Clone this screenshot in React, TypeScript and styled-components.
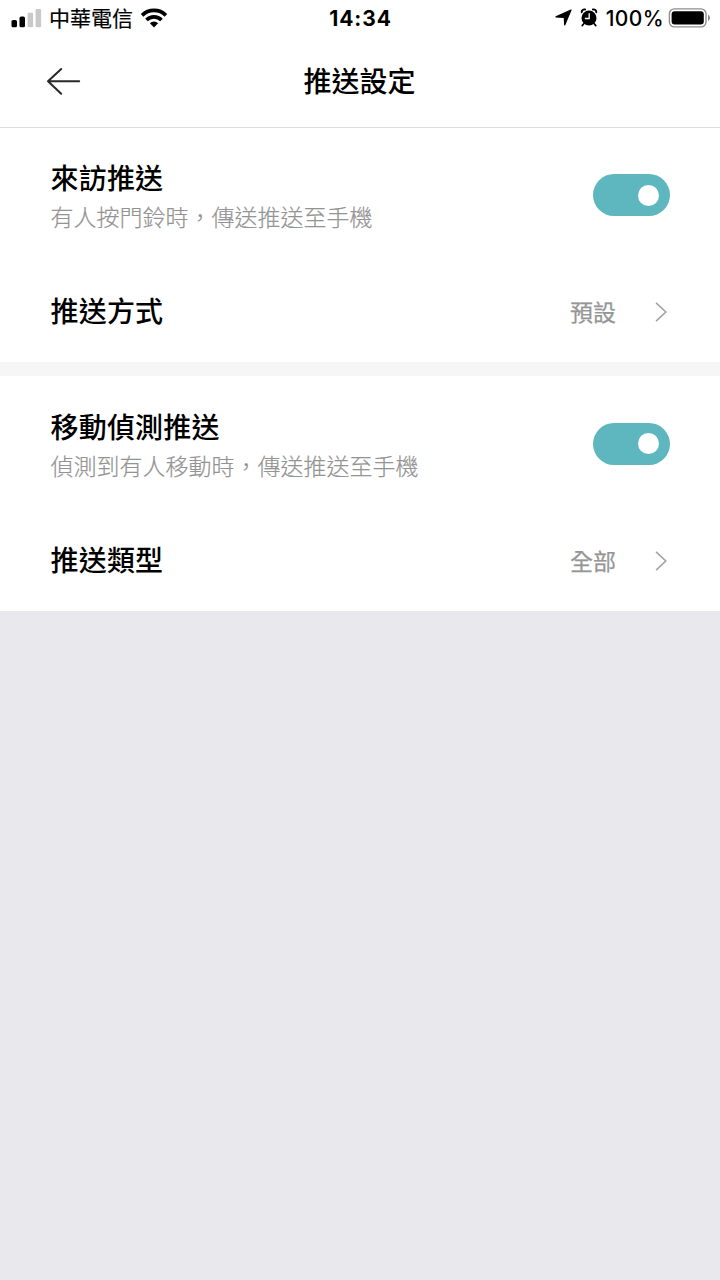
import React from "react";
import styled, { createGlobalStyle } from "styled-components";

const GlobalStyle = createGlobalStyle`
  * { box-sizing: border-box; }
  html, body { margin: 0; padding: 0; background: #e9e8ed; }
  body { font-family: "Noto Sans CJK TC", sans-serif; color: #000; }
`;

const Screen = styled.div`
  width: 720px;
  min-height: 1280px;
  background: #e9e8ed;
`;

const StatusBar = styled.header`
  display: grid;
  grid-template-columns: 1fr auto 1fr;
  align-items: start;
  height: 36px;
  padding: 0 9px 0 11px;
  background: #fff;
  font-family: Inter, "Noto Sans CJK TC", sans-serif;
`;

const StatusGroup = styled.div<{ $end?: boolean }>`
  display: flex;
  align-items: center;
  justify-content: ${(p) => (p.$end ? "flex-end" : "flex-start")};
  height: 35px;
  svg { display: block; flex: none; }
`;

const Carrier = styled.span`
  margin: 0 7px 2px 7px;
  font: 400 21px/34px "Noto Sans CJK TC", sans-serif;
  -webkit-text-stroke: 0.2px #000;
  white-space: nowrap;
`;

const Clock = styled.time`
  margin: 1px 1px 0 0;
  font-size: 21px;
  line-height: 36px;
  font-weight: 700;
  letter-spacing: 0.9px;
`;

const Percent = styled.span`
  margin: 2px 4px 0 8px;
  font-size: 21px;
  line-height: 36px;
  font-weight: 500;
  letter-spacing: 0.4px;
`;

const StatusIcons = styled.div`
  display: flex;
  align-items: center;
  gap: 8px;
`;

const NavBar = styled.nav`
  display: grid;
  grid-template-columns: 1fr auto 1fr;
  align-items: center;
  height: 92px;
  padding: 0 46px 2px;
  background: #fff;
  border-bottom: 1px solid #dedede;
`;

const BackButton = styled.button`
  width: 36px;
  height: 36px;
  padding: 0;
  border: 0;
  background: none;
  svg { display: block; }
`;

const NavTitle = styled.h1`
  margin: 0 1px 2px 0;
  font-size: 28px;
  line-height: 40px;
  font-weight: 500;
`;

const Section = styled.section<{ $divided?: boolean }>`
  background: #fff;
  border-bottom: ${(p) => (p.$divided ? "14px solid #f6f6f6" : "0")};
`;

const Row = styled.div<{ $height: number }>`
  display: flex;
  align-items: center;
  justify-content: space-between;
  height: ${(p) => p.$height}px;
  padding: 0 50px 0 50.5px;
`;

const Texts = styled.div`
  padding-top: 2px;
`;

const Label = styled.h2<{ $raised?: boolean }>`
  margin: 0;
  padding-bottom: ${(p) => (p.$raised ? 4 : 0)}px;
  font-size: 28px;
  line-height: 40px;
  font-weight: 500;
  letter-spacing: 0.2px;
`;

const Hint = styled.p`
  margin: 0;
  font-size: 23px;
  line-height: 38px;
  font-weight: 300;
  color: #939393;
  -webkit-text-stroke: 0.2px #939393;
`;

const Toggle = styled.button`
  display: flex;
  align-items: center;
  justify-content: flex-end;
  width: 77px;
  height: 42px;
  padding: 0 11px;
  border: 0;
  border-radius: 21px;
  background: #5eb6be;
`;

const Knob = styled.span`
  width: 21px;
  height: 21px;
  border-radius: 50%;
  background: #fff;
`;

const Value = styled.span`
  display: flex;
  align-items: center;
  gap: 39px;
  font-size: 23px;
  line-height: 34px;
  color: #969696;
  svg { display: block; margin-right: 2px; }
`;

const ValueText = styled.span`
  padding-bottom: 3px;
  -webkit-text-stroke: 0.25px #969696;
`;

const SignalIcon = () => (
  <svg width="31" height="20" viewBox="0 0 31 20">
    <rect x="0.5" y="12" width="5.5" height="7.3" rx="1.6" />
    <rect x="8.5" y="8.6" width="5.5" height="10.7" rx="1.6" />
    <rect x="16.6" y="4.7" width="5.5" height="14.6" rx="1.4" fill="#c9c9c9" />
    <rect x="24.6" y="0.9" width="5.5" height="18.4" rx="1.4" fill="#c9c9c9" />
  </svg>
);

const WifiIcon = () => (
  <svg width="28" height="20" viewBox="0 0 28 20">
    <g fill="none" stroke="#000" strokeWidth="3.7">
      <path d="M2.1 7.4a16.8 16.8 0 0 1 23.8 0" />
      <path d="M6.5 12a10.6 10.6 0 0 1 15 0" />
    </g>
    <path d="M9.9 15.3a5.8 5.8 0 0 1 8.2 0L14 19.4Z" />
  </svg>
);

const LocationIcon = () => (
  <svg width="17" height="17" viewBox="0 0 17 17">
    <path
      d="M16 1 1 7.9l8.3.5.4 7.6Z"
      stroke="#000"
      strokeWidth="1.2"
      strokeLinejoin="round"
    />
  </svg>
);

const AlarmIcon = () => (
  <svg width="18" height="19" viewBox="0 0 18 19">
    <circle cx="9" cy="10" r="7.5" />
    <path
      d="M1.7 4.2A2.6 2.6 0 0 1 5.1 1.5M16.3 4.2a2.6 2.6 0 0 0-3.4-2.7"
      fill="none"
      stroke="#000"
      strokeWidth="1.9"
      strokeLinecap="round"
    />
    <path d="m4 15.5-1.8 2.1M14 15.5l1.8 2.1" stroke="#000" strokeWidth="1.7" strokeLinecap="round" />
    <path d="M9.2 5.6v4.9H5.4" fill="none" stroke="#fff" strokeWidth="1.3" strokeLinecap="round" />
  </svg>
);

const BatteryIcon = () => (
  <svg width="43" height="20" viewBox="0 0 43 20">
    <rect x="1.4" y="0.9" width="36.6" height="18" rx="5" fill="none" stroke="#8e8e8e" strokeWidth="1.4" />
    <rect x="3.6" y="3.2" width="32.2" height="13.4" rx="3" />
    <path d="M40 6.8c2.7 1 2.7 5.2 0 6.2Z" fill="#8e8e8e" />
  </svg>
);

const BackIcon = () => (
  <svg width="36" height="36" viewBox="0 0 36 36" fill="none" stroke="#28292b" strokeWidth="2" strokeLinecap="round" strokeLinejoin="round">
    <path d="M33.2 18.3H2M15.2 6 2 18.3l13.2 12.4" />
  </svg>
);

const ChevronIcon = () => (
  <svg width="13" height="22" viewBox="0 0 13 22" fill="none" stroke="#a3a3a3" strokeWidth="1.6">
    <path d="m1.1 1.8 9.7 9.2-9.7 9.2" />
  </svg>
);

interface GroupProps {
  label: string;
  hint: string;
  option: string;
  value: string;
  toggleHeight: number;
  divided?: boolean;
}

const SettingGroup = ({ label, hint, option, value, toggleHeight, divided }: GroupProps) => (
  <Section $divided={divided}>
    <Row $height={toggleHeight}>
      <Texts>
        <Label>{label}</Label>
        <Hint>{hint}</Hint>
      </Texts>
      <Toggle role="switch" aria-checked="true" aria-label={label}>
        <Knob />
      </Toggle>
    </Row>
    <Row $height={100}>
      <Label $raised>{option}</Label>
      <Value>
        <ValueText>{value}</ValueText>
        <ChevronIcon />
      </Value>
    </Row>
  </Section>
);

export default function App() {
  return (
    <Screen>
      <GlobalStyle />
      <StatusBar>
        <StatusGroup>
          <SignalIcon />
          <Carrier>中華電信</Carrier>
          <WifiIcon />
        </StatusGroup>
        <Clock>14:34</Clock>
        <StatusGroup $end>
          <StatusIcons>
            <LocationIcon />
            <AlarmIcon />
          </StatusIcons>
          <Percent>100%</Percent>
          <BatteryIcon />
        </StatusGroup>
      </StatusBar>
      <NavBar>
        <BackButton aria-label="返回">
          <BackIcon />
        </BackButton>
        <NavTitle>推送設定</NavTitle>
      </NavBar>
      <SettingGroup
        label="來訪推送"
        hint="有人按門鈴時，傳送推送至手機"
        option="推送方式"
        value="預設"
        toggleHeight={134}
        divided
      />
      <SettingGroup
        label="移動偵測推送"
        hint="偵測到有人移動時，傳送推送至手機"
        option="推送類型"
        value="全部"
        toggleHeight={135}
      />
    </Screen>
  );
}
